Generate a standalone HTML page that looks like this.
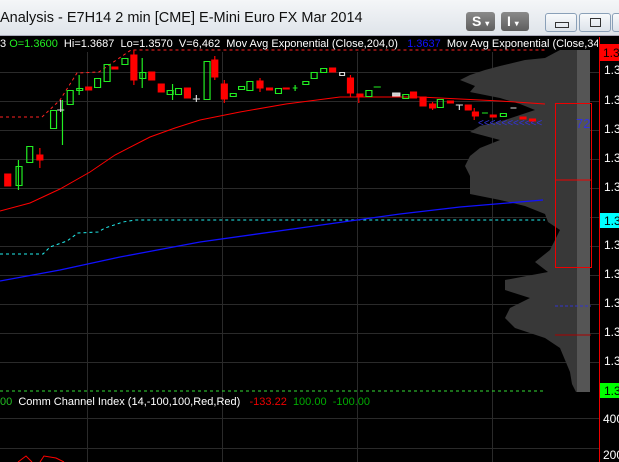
<!DOCTYPE html>
<html><head><meta charset="utf-8"><style>
body{margin:0;width:619px;height:462px;overflow:hidden;background:#000;font-family:"Liberation Sans",sans-serif;position:relative}
.tb{position:absolute;left:0;top:0;width:619px;height:35px;background:linear-gradient(#f4f6f8,#dfe4ea);border-bottom:1px solid #aab;overflow:hidden}
.tt{position:absolute;left:0;top:10px;font-size:14.5px;color:#111;white-space:nowrap}
.b{position:absolute;top:12px;height:19px;border-radius:3px;background:linear-gradient(#8a8a8a,#5e5e5e);color:#fff;font-weight:bold;font-size:14px;line-height:19px;padding-left:6px;box-sizing:border-box}
.w{position:absolute;top:13px;height:17px;border:1px solid #8aa0b8;border-radius:3px;background:linear-gradient(#f8fafc,#dde3ea)}
.hd{position:absolute;top:38px;left:0;font-size:11px;color:#fff;white-space:nowrap;overflow:hidden;width:598px}
svg{position:absolute;left:0;top:0}
</style></head><body>
<div class="tb"><div class="tt">Analysis - E7H14 2 min [CME] E-Mini Euro FX Mar 2014</div>
<div class="b" style="left:466px;width:29px">S <span style="font-size:8px">▾</span></div>
<div class="b" style="left:501px;width:28px">I <span style="font-size:8px">▾</span></div>
<div class="w" style="left:545px;width:30px"><div style="position:absolute;left:9px;top:8px;width:12px;height:4px;border:1px solid #333"></div></div>
<div class="w" style="left:579px;width:30px"><div style="position:absolute;left:10px;top:4px;width:9px;height:7px;border:1px solid #333"></div></div>
<div class="w" style="left:612px;width:20px"></div>
</div>
<svg width="619" height="462" viewBox="0 0 619 462">
<g stroke="#2a2a2a" stroke-width="1">
<line x1="87.5" y1="52" x2="87.5" y2="462"/><line x1="222.5" y1="52" x2="222.5" y2="462"/><line x1="357.5" y1="52" x2="357.5" y2="462"/><line x1="492.5" y1="52" x2="492.5" y2="462"/>
<line x1="0" y1="72.5" x2="599" y2="72.5"/><line x1="0" y1="101.5" x2="599" y2="101.5"/><line x1="0" y1="130.5" x2="599" y2="130.5"/><line x1="0" y1="159.5" x2="599" y2="159.5"/><line x1="0" y1="188.5" x2="599" y2="188.5"/><line x1="0" y1="217.5" x2="599" y2="217.5"/><line x1="0" y1="246.5" x2="599" y2="246.5"/><line x1="0" y1="275.5" x2="599" y2="275.5"/><line x1="0" y1="304.5" x2="599" y2="304.5"/><line x1="0" y1="333.5" x2="599" y2="333.5"/><line x1="0" y1="362.5" x2="599" y2="362.5"/>
<line x1="0" y1="418.5" x2="599" y2="418.5"/><line x1="0" y1="448.5" x2="599" y2="448.5"/>
</g>
<polygon fill="#383838" points="590,50 560,50 545,58 525,60 500,66 485,70 470,75 460,80 475,86 470,92 500,98 520,104 535,110 520,115 505,120 480,126 470,132 500,140 480,148 470,156 465,166 470,176 470,186 470,194 500,200 525,206 545,214 548,222 560,230 555,240 550,250 535,262 548,272 505,280 505,290 530,298 510,308 505,318 515,328 545,338 560,348 565,360 570,372 572,384 576,392 590,392"/>
<rect x="577" y="50" width="13" height="342" fill="#555"/>
<rect x="555.5" y="103.5" width="36" height="164" fill="none" stroke="#e00" stroke-width="1"/>
<line x1="555" y1="180" x2="591" y2="180" stroke="#e00"/>
<line x1="555" y1="306" x2="591" y2="306" stroke="#33c" stroke-dasharray="3,2"/>
<line x1="555" y1="335" x2="591" y2="335" stroke="#a00"/>
<text x="478" y="126" fill="#33d" font-size="10" font-family="Liberation Sans">&lt;&lt;&lt;&lt;&lt;&lt;&lt;&lt;&lt;&lt;&lt;</text>
<text x="576" y="128" fill="#33d" font-size="13" font-family="Liberation Sans">72</text>
<polyline fill="none" stroke="#f22" stroke-dasharray="3,3" points="0,117 42,117 60,100 77,73 99,72 131,50 545,50"/>
<polyline fill="none" stroke="#2ee" stroke-dasharray="3,3" points="0,254 43,254 50,247 67,241 78,233 98,232 105,228 123,222 135,220 545,220"/>
<line x1="0" y1="391" x2="545" y2="391" stroke="#3d3" stroke-dasharray="3,3"/>
<polyline fill="none" stroke="#f00" points="0,211 30,203 60,189 90,172 115,155 150,137 175,128 200,120 240,112 286,104 340,97 420,97 500,101 545,104"/>
<polyline fill="none" stroke="#11f" stroke-width="1.3" points="0,281 60,270 120,257 200,242 300,228 357,220 400,214 460,207 543,200"/>
<g stroke-width="1" transform="scale(1.19,1)">
<g fill="#f00" stroke="#f00">
<rect x="4" y="174" width="5" height="12"/><rect x="31" y="155" width="5" height="5"/><rect x="72" y="87" width="5" height="3"/><rect x="94" y="67" width="5" height="2"/><rect x="110" y="55" width="5" height="25"/><rect x="125" y="72" width="5" height="8"/><rect x="133" y="84" width="5" height="8"/><rect x="155" y="88" width="5" height="10"/><rect x="178" y="60" width="5" height="17"/><rect x="186" y="84" width="5" height="15"/><rect x="216" y="81" width="5" height="7"/><rect x="224" y="88" width="5" height="2"/><rect x="238" y="88" width="5" height="1"/><rect x="277" y="68" width="5" height="4"/><rect x="292" y="78" width="5" height="15"/><rect x="300" y="94" width="5" height="3"/><rect x="345" y="92" width="5" height="6"/><rect x="353" y="97" width="5" height="9"/><rect x="361" y="104" width="5" height="4"/><rect x="376" y="101" width="5" height="2"/><rect x="391" y="105" width="5" height="5"/><rect x="397" y="112" width="5" height="4"/><rect x="412" y="115" width="5" height="2"/><rect x="437" y="117" width="5" height="2"/><rect x="445" y="119" width="5" height="2"/>
<line x1="33.5" y1="148" x2="33.5" y2="168"/><line x1="112.5" y1="50" x2="112.5" y2="85"/><line x1="180.5" y1="56" x2="180.5" y2="80"/><line x1="188.5" y1="80" x2="188.5" y2="103"/><line x1="218.5" y1="78" x2="218.5" y2="92"/><line x1="294.5" y1="75" x2="294.5" y2="97"/><line x1="301.5" y1="94" x2="301.5" y2="103"/><line x1="363.5" y1="102" x2="363.5" y2="110"/><line x1="398.5" y1="108" x2="398.5" y2="120"/>
</g>
<g fill="none" stroke="#2e2">
<rect x="13.5" y="166.5" width="5" height="19"/><rect x="22.5" y="146.5" width="5" height="16"/><rect x="42.5" y="110.5" width="5" height="18"/><rect x="56.5" y="90.5" width="5" height="14"/><rect x="64.5" y="88.5" width="5" height="2"/><rect x="79.5" y="78.5" width="5" height="9"/><rect x="87.5" y="64.5" width="5" height="17"/><rect x="102.5" y="58.5" width="5" height="6"/><rect x="117.5" y="72.5" width="5" height="6"/><rect x="140.5" y="90.5" width="5" height="4"/><rect x="147.5" y="88.5" width="5" height="6"/><rect x="171.5" y="61.5" width="5" height="38"/><rect x="193.5" y="93.5" width="5" height="3"/><rect x="200.5" y="86.5" width="5" height="3"/><rect x="207.5" y="81.5" width="5" height="9"/><rect x="231.5" y="88.5" width="5" height="5"/><rect x="254.5" y="81.5" width="5" height="3"/><rect x="261.5" y="72.5" width="5" height="6"/><rect x="269.5" y="68.5" width="5" height="4"/><rect x="307.5" y="90.5" width="5" height="6"/><rect x="338.5" y="94.5" width="5" height="4"/><rect x="367.5" y="99.5" width="5" height="8"/><rect x="420.5" y="113.5" width="5" height="3"/>
<line x1="15.5" y1="160" x2="15.5" y2="190"/><line x1="52.5" y1="100" x2="52.5" y2="145"/><line x1="66.5" y1="75" x2="66.5" y2="95"/><line x1="119.5" y1="58" x2="119.5" y2="88"/><line x1="145" y1="84" x2="145" y2="100"/><line x1="246" y1="88" x2="250" y2="88"/><line x1="248" y1="85" x2="248" y2="91"/><line x1="314" y1="87" x2="320" y2="87"/><line x1="405" y1="113" x2="410" y2="113"/>
</g>
<g stroke="#ddd" fill="#ccc">
<line x1="51" y1="100" x2="51" y2="112"/><line x1="48" y1="110" x2="54" y2="110"/><line x1="165" y1="95" x2="165" y2="102"/><line x1="162" y1="99" x2="168" y2="99"/><rect x="285.5" y="72.5" width="4" height="3" fill="none"/><rect x="330" y="93" width="6" height="3"/><line x1="383" y1="105" x2="389" y2="105"/><line x1="386" y1="105" x2="386" y2="110"/><line x1="429" y1="108" x2="434" y2="108"/>
</g>
</g>
<line x1="599.5" y1="37" x2="599.5" y2="462" stroke="#e00"/>
<rect x="600" y="44" width="19" height="17" fill="#f00"/>
<rect x="600" y="213" width="19" height="15" fill="#0ff"/>
<rect x="600" y="383" width="19" height="15" fill="#0f0"/>
<g font-size="12" fill="#fff" font-family="Liberation Sans">
<text x="603" y="57" fill="#000">1.3</text>
<text x="604" y="74">1.3</text><text x="604" y="104">1.3</text><text x="604" y="133">1.3</text><text x="604" y="162">1.3</text><text x="604" y="191">1.3</text>
<text x="604" y="225" fill="#000">1.3</text>
<text x="604" y="249">1.3</text><text x="604" y="278">1.3</text><text x="604" y="307">1.3</text><text x="604" y="336">1.3</text><text x="604" y="365">1.3</text>
<text x="604" y="395" fill="#000">1.3</text>
<text x="603" y="423">400</text><text x="603" y="459">200</text>
</g>
<g stroke="#f00" fill="none"><polyline points="18,462 26,456 32,462"/><polyline points="40,462 44,456 56,458 64,462"/></g>
</svg>
<div class="hd"><span style="color:#fff">3</span> <span style="color:#2e2">O=1.3600</span>&nbsp; Hi=1.3687&nbsp; Lo=1.3570&nbsp; V=6,462&nbsp; Mov Avg Exponential (Close,204,0)&nbsp;&nbsp; <span style="color:#11f">1.3637</span>&nbsp; Mov Avg Exponential (Close,34 ...</div>
<div class="hd" style="top:396px"><span style="color:#2b2">00</span>&nbsp; Comm Channel Index (14,-100,100,Red,Red)&nbsp;&nbsp; <span style="color:#e00">-133.22</span>&nbsp; <span style="color:#0a0">100.00</span>&nbsp; <span style="color:#0a0">-100.00</span></div>
</body></html>
